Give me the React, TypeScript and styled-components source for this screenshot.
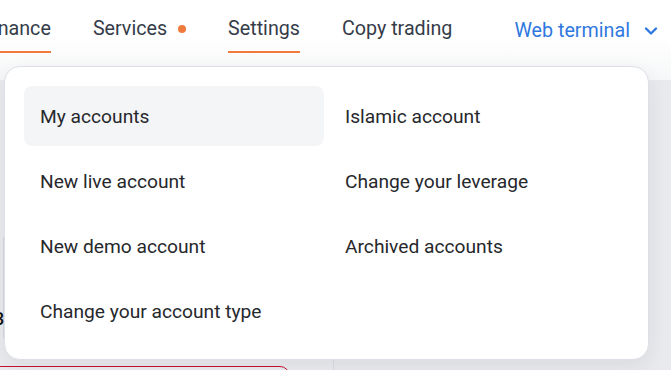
import styled, { createGlobalStyle } from "styled-components";

const GlobalStyle = createGlobalStyle`
  html, body {
    margin: 0;
    padding: 0;
    background: #eaebee;
    font-family: Roboto, "Liberation Sans", sans-serif;
  }
  * {
    box-sizing: border-box;
  }
`;

const Page = styled.div`
  position: relative;
  width: 671px;
  height: 370px;
  overflow: hidden;
  background: #eaebee;
`;

const Header = styled.header`
  height: 80px;
  background: linear-gradient(to bottom, #ffffff 0%, #ffffff 45%, #f6f7f8 100%);
`;

const Nav = styled.nav`
  display: flex;
  align-items: flex-start;
  gap: 42px;
  margin-left: -18px;
  padding-top: 18px;
`;

const NavItem = styled.a<{ active?: boolean }>`
  display: flex;
  align-items: center;
  gap: 11px;
  height: 35px;
  padding-bottom: 11px;
  font-size: 19.7px;
  line-height: 24px;
  color: #353c49;
  text-decoration: none;
  border-bottom: 2px solid ${(p) => (p.active ? "#f07a3c" : "transparent")};
  white-space: nowrap;
`;

const Dot = styled.span`
  width: 8px;
  height: 8px;
  border-radius: 50%;
  background: #f07a3c;
`;

const TerminalLink = styled.a`
  display: flex;
  align-items: center;
  gap: 14px;
  margin-left: 20px;
  font-size: 19.7px;
  line-height: 24px;
  height: 24px;
  margin-top: 1px;
  color: #2f78e0;
  white-space: nowrap;
`;

const Main = styled.main`
  display: flex;
  height: 290px;
`;

const LeftCard = styled.section`
  width: 334px;
  border-right: 1px solid #d9dce1;
  display: flex;
  flex-direction: column;
  padding-top: 157px;
`;

const Row = styled.div<{ h: number }>`
  flex-shrink: 0;
  height: ${(p) => p.h}px;
  border-top: 1px solid #d6d9de;
  border-left: 1px solid #d6d9de;
  margin-left: 3px;
  padding-bottom: 8px;
  font-size: 18px;
  display: flex;
  align-items: flex-end;
`;

const Divider = styled.div`
  flex-shrink: 0;
  height: 1px;
  margin-left: 3px;
  background: #d6d9de;
`;

const Digit = styled.span`
  margin-left: -10px;
  color: #111;
  font-weight: 500;
`;

const DangerButton = styled.div`
  flex-shrink: 0;
  margin-top: 28px;
  margin-left: -10px;
  width: 300px;
  height: 40px;
  border: 1.5px solid #c8102e;
  border-radius: 10px;
`;

const RightArea = styled.div`
  flex: 1;
  background: #e9eaed;
`;

const Dropdown = styled.div`
  position: absolute;
  top: 66px;
  left: 4px;
  width: 645px;
  height: 294px;
  padding: 19px;
  background: #ffffff;
  border: 1px solid #dde0e6;
  border-radius: 16px;
  box-shadow: 0 6px 20px rgba(30, 40, 60, 0.08);
  display: grid;
  grid-template-columns: 1fr 1fr;
  grid-auto-flow: column;
  grid-template-rows: repeat(4, 60px);
  column-gap: 5px;
  row-gap: 5px;
`;

const MenuItem = styled.a<{ selected?: boolean }>`
  display: flex;
  align-items: center;
  padding: 0 16px;
  border-radius: 8px;
  background: ${(p) => (p.selected ? "#f4f5f7" : "transparent")};
  font-size: 19.2px;
  color: #26282c;
  white-space: nowrap;
`;

function Chevron() {
  return (
    <svg width="14" height="10" viewBox="0 0 14 10" fill="none">
      <path
        d="M2 2.5 L7 7.5 L12 2.5"
        stroke="#2f78e0"
        strokeWidth="2.4"
        strokeLinecap="round"
        strokeLinejoin="round"
      />
    </svg>
  );
}

const leftItems = ["My accounts", "New live account", "New demo account", "Change your account type"];
const rightItems = ["Islamic account", "Change your leverage", "Archived accounts"];

export default function App() {
  return (
    <Page>
      <GlobalStyle />
      <Header>
        <Nav>
          <NavItem active>Finance</NavItem>
          <NavItem>
            Services
            <Dot />
          </NavItem>
          <NavItem active>Settings</NavItem>
          <NavItem>Copy trading</NavItem>
          <TerminalLink>
            Web terminal
            <Chevron />
          </TerminalLink>
        </Nav>
      </Header>
      <Main>
        <LeftCard>
          <Row h={41} />
          <Row h={59}>
            <Digit>3</Digit>
          </Row>
          <Divider />
          <DangerButton />
        </LeftCard>
        <RightArea />
      </Main>
      <Dropdown>
        {leftItems.map((label, i) => (
          <MenuItem key={label} selected={i === 0}>
            {label}
          </MenuItem>
        ))}
        {rightItems.map((label) => (
          <MenuItem key={label}>{label}</MenuItem>
        ))}
      </Dropdown>
    </Page>
  );
}
